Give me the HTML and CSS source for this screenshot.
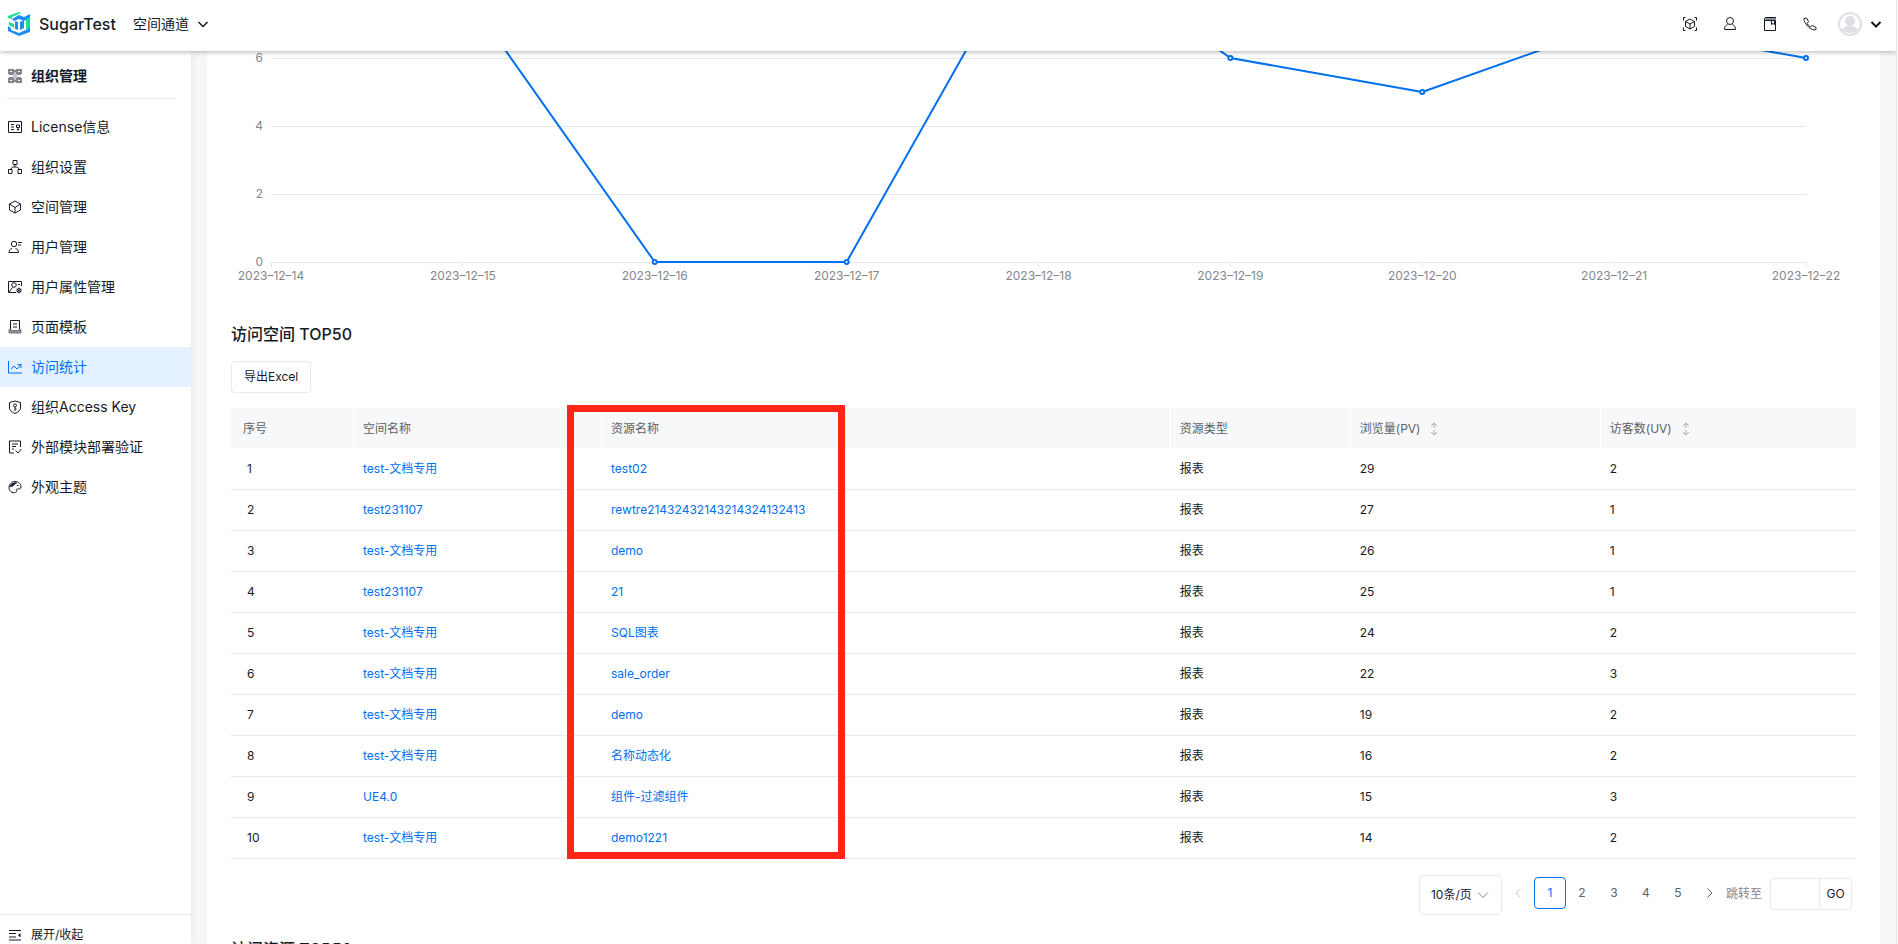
FILE: index.html
```html
<!DOCTYPE html>
<html lang="zh-CN">
<head>
<meta charset="utf-8">
<title>SugarTest</title>
<link rel="stylesheet" href="styles.css">
</head>
<body>
<div class="app">
<header class="topbar">
  <a class="brand" href="#">
    <svg class="brand-logo" viewBox="0 0 22 24" width="22" height="24">
      <path d="M0 4 11 0l2 1-9 4v2L0 6z" fill="#12e08c"/>
      <path d="M18 6l4-2v15l-4-2z" fill="#12e08c"/>
      <path d="M4 7l7-4 5 2 6-3v3l-6 4-5-2-5 2z" fill="#1f8bff"/>
      <path d="M0 14l3 2v2l8 3 11-5v4l-11 4-11-5z" fill="#1f8bff"/>
      <path d="M7 9l3 1v8l-3-1zM12 10l4-2v8l-4 2z" fill="#1f8bff"/>
      <path d="M1 10l5 2v4l-5-3z" fill="#12e08c"/>
    </svg>
    <span>SugarTest</span>
  </a>
  <button class="channel" type="button">空间通道
    <svg class="icon" viewBox="0 0 12 12" width="12" height="12"><path d="M1.500 4l4.500 4.500L10.500 4"/></svg>
  </button>
  <nav class="tools" aria-label="工具">
    <button type="button" aria-label="模型"><svg class="icon" viewBox="0 0 16 16" width="16" height="16"><path d="M1.500 4.500v-3h2M12.500 1.500h2v3M14.500 11.500v3h-2M3.500 14.500h-2v-3M8 3l4.500 2.500v5L8 13l-4.500-2.500v-5zM3.500 5.500 8 8l4.500-2.500M8 8v5"/></svg></button>
    <button type="button" aria-label="用户"><svg class="icon" viewBox="0 0 16 16" width="16" height="16"><circle cx="8" cy="5" r="3.500"/><path d="M5.500 8.500C3.500 9.500 2.500 11 2.500 13.500h11c0-2.500-1-4-3-5"/></svg></button>
    <button type="button" aria-label="文档"><svg class="icon" viewBox="0 0 16 16" width="16" height="16"><path d="M14 1.500H4a1.500 1.500 0 0 0 0 3h9.500v10h-11V3M4 3h10M9.500 5v3.500l1.500-1 1.500 1V5"/></svg></button>
    <button type="button" aria-label="电话"><svg class="icon" viewBox="0 0 16 16" width="16" height="16"><path d="M2 2.500 4.500 2 6.500 5.500 5 7.500c1 1.500 2 2.500 3.500 3.500l2-1.500L14 11.500v2c-2 1-5 0-7.500-2.500S1.500 5 2 2.500z"/></svg></button>
    <button class="account" type="button" aria-label="账户">
      <svg viewBox="0 0 24 24" width="24" height="24"><circle cx="12" cy="12" r="11" fill="#fff" stroke="#dfe0e4" stroke-width="2"/><circle cx="12" cy="9" r="5" fill="#dfe0e4"/><path d="M4 18c2-3 4-4 5-4h6c1 0 3 1 5 4-4 4-12 4-16 0z" fill="#dfe0e4"/></svg>
      <svg class="icon icon-bold" viewBox="0 0 12 12" width="12" height="12"><path d="M1.500 4l4.500 4.500L10.500 4"/></svg>
    </button>
  </nav>
</header>
<div class="body">
<aside class="sidebar">
  <h2 class="side-title"><svg class="icon gray" viewBox="0 0 14 14" width="14" height="14"><path d="M1 1h4v3H1zM9 1h4v3H9zM1 10h4v3H1zM9 10h4v3H9zM5 2h4M5 12h4" stroke-width="2"/><path d="M5 4h4M5 10h4M6 5v4M8 5v4M1 5.500h4M9 5.500h4M1 8.500h4M9 8.500h4"/></svg>组织管理</h2>
  <nav class="menu" aria-label="组织管理">
    <a href="#"><svg class="icon" viewBox="0 0 14 14" width="14" height="14"><path d="M.5 1.500h13v11H.5zM3 4.500h3M3 7h3M3 9.500h3M8.500 5h3v2.500h-3zM10 7.500v3M9 9.500h2"/></svg>License信息</a>
    <a href="#"><svg class="icon" viewBox="0 0 14 14" width="14" height="14"><path d="M5 .5h4v4H5zM.5 9.500H4v4H.5zM10 9.500h3.500v4H10zM7 4.500V7M2.500 9.500 4.500 7h5l2 2.500"/></svg>组织设置</a>
    <a href="#"><svg class="icon" viewBox="0 0 14 14" width="14" height="14"><path d="M7 1l5.500 3v6L7 13l-5.500-3V4zM1.500 4 7 7.500 12.500 4M7 7.500V13"/></svg>空间管理</a>
    <a href="#"><svg class="icon" viewBox="0 0 14 14" width="14" height="14"><circle cx="6" cy="4" r="2.700"/><path d="M4 8.500c-2 .5-3 2-3 4h9.500c0-2-1-3.500-3-4M10 2.500h4M10 5h3"/></svg>用户管理</a>
    <a href="#"><svg class="icon" viewBox="0 0 14 14" width="14" height="14"><path d="M13.500 6V1.500H.5v11H8M1 12 4.500 7.500M10 4.500h2"/><circle cx="6" cy="5" r="2.300"/><circle cx="11" cy="10.500" r="2"/><path d="M11 7.500v6M8.500 9l5 3M8.500 12l5-3" stroke-width=".7"/></svg>用户属性管理</a>
    <a href="#"><svg class="icon" viewBox="0 0 14 14" width="14" height="14"><path d="M2.500 9V.5h9V9M5 4h4M5 7h4"/><path d="M1 9.500h2v1h8v-1h2v3.500H1z" fill="#8b8e96" stroke="#777a83"/></svg>页面模板</a>
    <a class="active" href="#" aria-current="page"><svg class="icon" viewBox="0 0 14 14" width="14" height="14"><path d="M.5 1v12H14M3 9l3-3 3 3 4-4.500M9.500 4.500H13V8"/></svg>访问统计</a>
    <a href="#"><svg class="icon" viewBox="0 0 14 14" width="14" height="14"><path d="M7 1l5.500 1.500V8c0 2-2 4-5.500 5.500C3.500 12 1.500 10 1.500 8V2.500z"/><circle cx="7" cy="5.500" r="1.500"/><path d="M7 7v4M7 9h1.500"/></svg>组织Access Key</a>
    <a href="#"><svg class="icon" viewBox="0 0 14 14" width="14" height="14"><path d="M12.500 7V1h-11v12H6M4 4h6M4 6.500h4M4 9h2M7.500 10.500 10 13l3.500-4"/></svg>外部模块部署验证</a>
    <a href="#"><svg class="icon" viewBox="0 0 14 14" width="14" height="14"><path d="M7.500 12.500C4 13.500 1 11 1 7.500 1 4 4 1.500 7 1.500s6 2 6 5.500c0 2-2 2-3.500 2C8 9 8 10 8.500 11c.3.600 0 1.200-1 1.500zM1.500 7l3-1"/><path d="M2.500 5.500c1.500-2 3.500-3 6-2.500L6 4.500 5 6z" fill="currentColor"/><path d="M9 5.500h1.500"/></svg>外观主题</a>
  </nav>
  <button class="collapse" type="button"><svg class="icon" viewBox="0 0 14 14" width="14" height="14"><path d="M1 2.500h12M1 5.500h7M1 9h7M1 12h12"/><path d="M12.500 5v4.500L10 7.200z" fill="currentColor" stroke="none"/></svg>展开/收起</button>
</aside>
<main class="content">
  <div class="card">
    <figure class="chart" aria-label="访问趋势">
      <svg class="plot" width="100%" height="212">
        <g class="grid">
          <line x1="0" x2="100%" y1="7.500" y2="7.500"/><line x1="0" x2="100%" y1="75.500" y2="75.500"/><line x1="0" x2="100%" y1="143.500" y2="143.500"/><line x1="0" x2="100%" y1="211.500" y2="211.500"/>
          <line x1="0" x2="0" y1="211" y2="216"/><line x1="12.5%" x2="12.5%" y1="211" y2="216"/><line x1="25%" x2="25%" y1="211" y2="216"/><line x1="37.5%" x2="37.5%" y1="211" y2="216"/><line x1="50%" x2="50%" y1="211" y2="216"/><line x1="62.5%" x2="62.5%" y1="211" y2="216"/><line x1="75%" x2="75%" y1="211" y2="216"/><line x1="87.5%" x2="87.5%" y1="211" y2="216"/><line x1="100%" x2="100%" y1="211" y2="216"/>
        </g>
        <g class="series">
          <line x1="12.5%" y1="-61" x2="25%" y2="211"/><line x1="25%" y1="211" x2="37.5%" y2="211"/><line x1="37.5%" y1="211" x2="50%" y2="-129"/><line x1="50%" y1="-129" x2="62.5%" y2="7"/><line x1="62.5%" y1="7" x2="75%" y2="41"/><line x1="75%" y1="41" x2="87.5%" y2="-27"/><line x1="87.5%" y1="-27" x2="100%" y2="7"/>
          <circle cx="25%" cy="211" r="2"/><circle cx="37.5%" cy="211" r="2"/><circle cx="62.5%" cy="7" r="2"/><circle cx="75%" cy="41" r="2"/><circle cx="100%" cy="7" r="2"/>
        </g>
        <g class="axis-y"><text x="-8" y="11">6</text><text x="-8" y="79">4</text><text x="-8" y="147">2</text><text x="-8" y="215">0</text></g>
        <g class="axis-x"><text x="0" y="229">2023–12–14</text><text x="12.5%" y="229">2023–12–15</text><text x="25%" y="229">2023–12–16</text><text x="37.5%" y="229">2023–12–17</text><text x="50%" y="229">2023–12–18</text><text x="62.5%" y="229">2023–12–19</text><text x="75%" y="229">2023–12–20</text><text x="87.5%" y="229">2023–12–21</text><text x="100%" y="229">2023–12–22</text></g>
      </svg>
    </figure>
    <section class="report">
      <h3>访问空间 TOP50</h3>
      <button class="export" type="button">导出Excel</button>
      <div class="table-wrap">
      <table>
        <colgroup><col class="c-no"><col class="c-space"><col class="c-res"><col class="c-type"><col class="c-pv"><col class="c-uv"></colgroup>
        <thead><tr><th>序号</th><th>空间名称</th><th>资源名称</th><th>资源类型</th>
          <th><button class="sort" type="button">浏览量(PV)<svg class="icon" viewBox="0 0 8 14" width="8" height="14"><path d="M1 4l3-3 3 3M4 1v5M1 10l3 3 3-3M4 13V8"/></svg></button></th>
          <th><button class="sort" type="button">访客数(UV)<svg class="icon" viewBox="0 0 8 14" width="8" height="14"><path d="M1 4l3-3 3 3M4 1v5M1 10l3 3 3-3M4 13V8"/></svg></button></th></tr></thead>
        <tbody>
          <tr><td>1</td><td><a href="#">test-文档专用</a></td><td><a href="#">test02</a></td><td>报表</td><td>29</td><td>2</td></tr>
          <tr><td>2</td><td><a href="#">test231107</a></td><td><a href="#">rewtre21432432143214324132413</a></td><td>报表</td><td>27</td><td>1</td></tr>
          <tr><td>3</td><td><a href="#">test-文档专用</a></td><td><a href="#">demo</a></td><td>报表</td><td>26</td><td>1</td></tr>
          <tr><td>4</td><td><a href="#">test231107</a></td><td><a href="#">21</a></td><td>报表</td><td>25</td><td>1</td></tr>
          <tr><td>5</td><td><a href="#">test-文档专用</a></td><td><a href="#">SQL图表</a></td><td>报表</td><td>24</td><td>2</td></tr>
          <tr><td>6</td><td><a href="#">test-文档专用</a></td><td><a href="#">sale_order</a></td><td>报表</td><td>22</td><td>3</td></tr>
          <tr><td>7</td><td><a href="#">test-文档专用</a></td><td><a href="#">demo</a></td><td>报表</td><td>19</td><td>2</td></tr>
          <tr><td>8</td><td><a href="#">test-文档专用</a></td><td><a href="#">名称动态化</a></td><td>报表</td><td>16</td><td>2</td></tr>
          <tr><td>9</td><td><a href="#">UE4.0</a></td><td><a href="#">组件-过滤组件</a></td><td>报表</td><td>15</td><td>3</td></tr>
          <tr><td>10</td><td><a href="#">test-文档专用</a></td><td><a href="#">demo1221</a></td><td>报表</td><td>14</td><td>2</td></tr>
        </tbody>
      </table>
      <div class="highlight"></div>
      </div>
      <nav class="pager" aria-label="分页">
        <span class="size"><select aria-label="每页条数"><option>10条/页</option></select><svg class="icon" viewBox="0 0 12 12" width="12" height="12"><path d="M1 3.500l5 5 5-5"/></svg></span>
        <button class="page prev" type="button" aria-label="上一页" disabled><svg class="icon" viewBox="0 0 12 12" width="12" height="12"><path d="M8.500 1.500 4 6l4.500 4.500"/></svg></button>
        <button class="page current" type="button" aria-current="page">1</button>
        <button class="page" type="button">2</button>
        <button class="page" type="button">3</button>
        <button class="page" type="button">4</button>
        <button class="page" type="button">5</button>
        <button class="page" type="button" aria-label="下一页"><svg class="icon" viewBox="0 0 12 12" width="12" height="12"><path d="M3.500 1.500 8 6l-4.500 4.500"/></svg></button>
        <label class="jump-label" for="jump">跳转至</label>
        <span class="jump"><input id="jump" type="text"><button type="button">GO</button></span>
      </nav>
    </section>
    <section class="report next"><h3>访问资源 TOP50</h3></section>
  </div>
</main>
</div>
</div>
</body>
</html>
```
FILE: styles.css
```css
* { box-sizing: border-box; }
body {
  margin: 0;
  font: 12px/20px Inter, "Noto Sans CJK SC", sans-serif;
  color: #151b26;
  background: #fff;
}
a { color: inherit; text-decoration: none; }
button, input, select { font: inherit; color: inherit; }
button { padding: 0; border: 0; background: none; cursor: pointer; }
h2, h3, figure { margin: 0; }
svg { flex: none; }
.icon { fill: none; stroke: currentColor; stroke-width: 1; }
.icon-bold { stroke-width: 2; }
.gray { color: #83868f; }

.app {
  display: flex;
  flex-direction: column;
  height: 100vh;
  margin-right: 1px;
  border-right: 1px solid #e8e9eb;
  overflow: hidden;
}
.topbar {
  position: relative;
  z-index: 2;
  flex: none;
  display: flex;
  align-items: center;
  height: 51px;
  padding: 0 14px 4px 8px;
  background: #fff;
  box-shadow: 0 1px 5px rgba(0, 0, 0, .3);
}
.brand { display: flex; align-items: center; gap: 9px; font-size: 16px; font-weight: 500; }
.channel { display: flex; align-items: center; gap: 8px; margin-left: 17px; font-size: 14px; }
.tools { display: flex; align-items: center; gap: 24px; margin-left: auto; }
.tools button { display: flex; }
.tools .account { align-items: center; gap: 8px; margin-left: -4px; }
.channel .icon { stroke-width: 1.5; }

.body { flex: 1; display: flex; min-height: 0; background: #f7f7f9; }
.sidebar {
  flex: none;
  display: flex;
  flex-direction: column;
  width: 191px;
  background: #fff;
  box-shadow: 0 0 8px rgba(0, 0, 0, .08);
  font-size: 14px;
}
.side-title {
  display: flex;
  align-items: center;
  gap: 9px;
  height: 48px;
  margin: 0 16px 8px 7px;
  padding: 2px 0 0 1px;
  border-bottom: 1px solid #e8e9eb;
  font-size: 14px;
  font-weight: 600;
}
.menu { flex: 1; }
.menu a { display: flex; align-items: center; gap: 9px; height: 40px; padding: 0 8px; }
.menu a.active { color: #0070f0; background: #e3f0ff; }
.collapse {
  display: flex;
  align-items: center;
  gap: 9px;
  height: 30px;
  padding: 10px 8px 0;
  border-top: 1px solid #e8e9eb;
  font-size: 12px;
}

.content { flex: 1; min-width: 0; padding: 0 16px; overflow: hidden; }
.card { height: 100%; padding: 0 24px; background: #fff; overflow: hidden; }
.chart { padding: 0 50px 0 40px; }
.plot { display: block; overflow: visible; }
.grid line { stroke: #e6e7ea; shape-rendering: crispEdges; }
.series line { stroke: #0070f0; stroke-width: 2; stroke-linecap: round; }
.series circle { fill: #fff; stroke: #0070f0; stroke-width: 2; }
.plot text { fill: #85878e; font-size: 12px; }
.axis-y text { text-anchor: end; }
.axis-x text { text-anchor: middle; }

.report { padding-top: 59px; }
.report h3 { font-size: 16px; line-height: 24px; font-weight: 500; }
.export {
  display: block;
  height: 32px;
  margin: 15px 0;
  padding: 0 12px;
  border: 1px solid #e8e9eb;
  border-radius: 4px;
}
.table-wrap { position: relative; }
table { width: 100%; table-layout: fixed; border-collapse: separate; border-spacing: 0; }
.c-no { width: 122px; }
.c-space { width: 248px; }
.c-res { width: 35%; }
.c-type { width: 180px; }
.c-pv { width: 250px; }
th {
  height: 41px;
  padding: 1px 10px 0;
  border-bottom: 1px solid #fff;
  background: #f7f8fa;
  color: #5c5f66;
  font-weight: 400;
  text-align: left;
}
th + th { border-left: 1px solid #fff; padding-left: 9px; }
th:first-child { padding-left: 12px; border-top-left-radius: 4px; }
th:last-child { border-top-right-radius: 4px; }
td { height: 41px; padding: 0 10px; border-bottom: 1px solid #e8e9eb; }
td:first-child { padding-left: 16px; }
td a { color: #0070f0; }
.sort { display: flex; align-items: center; gap: 10px; }
.sort .icon { color: #a8aab0; }
.highlight {
  position: absolute;
  top: -3px;
  bottom: 0;
  left: 336px;
  width: 278px;
  border: 7px solid #ff2617;
  pointer-events: none;
}
.pager { display: flex; align-items: center; justify-content: flex-end; height: 40px; margin: 16px 4px 0 0; }
.size { position: relative; display: flex; align-items: center; }
.size select {
  appearance: none;
  width: 83px;
  height: 40px;
  padding: 0 11px;
  border: 1px solid #e8e9eb;
  border-radius: 4px;
  background: #fff;
}
.size .icon { position: absolute; right: 13px; color: #85878e; pointer-events: none; }
.page {
  display: flex;
  align-items: center;
  justify-content: center;
  width: 32px;
  height: 32px;
  margin-bottom: 4px;
  border-radius: 4px;
  color: #5c5f66;
}
.page.current { border: 1px solid #0070f0; color: #0070f0; }
.page.prev { color: #c5c7cc; }
.jump-label { margin: 0 8px 2px 0; color: #85878e; }
.jump { display: flex; height: 32px; margin-bottom: 2px; }
.jump input { width: 50px; border: 1px solid #e8e9eb; border-radius: 4px 0 0 4px; }
.jump button { width: 32px; border: 1px solid #e8e9eb; border-left: 0; border-radius: 0 4px 4px 0; }
.next { padding-top: 22px; }
```
